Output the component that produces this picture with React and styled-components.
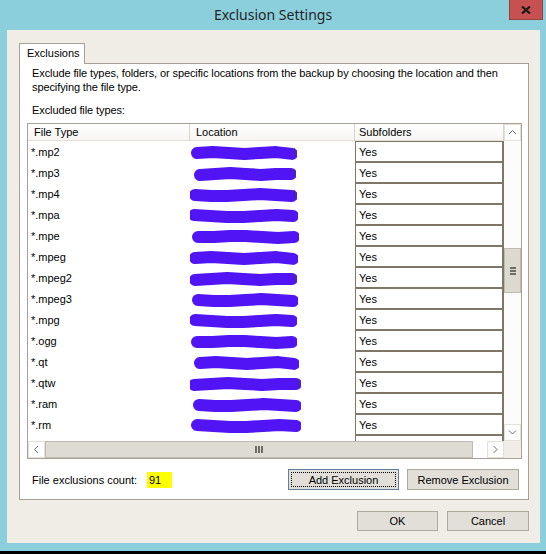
import React from "react";
import styled, { createGlobalStyle } from "styled-components";

const Global = createGlobalStyle`
  html, body { margin: 0; padding: 0; background: #000; }
  body { width: 546px; height: 554px; overflow: hidden; font-family: "Liberation Sans", Arial, sans-serif; font-size: 11px; color: #000; }
`;

const Window = styled.div`
  width: 546px;
  height: 551px;
  background: #8bcfdc;
  display: flex;
  flex-direction: column;
  padding-bottom: 8px;
  box-sizing: border-box;
`;

const TitleBar = styled.div`
  height: 30px;
  display: grid;
  grid-template-columns: 1fr auto 1fr;
  align-items: start;
`;

const Title = styled.div`
  grid-column: 2;
  font-family: "Noto Sans", "Open Sans", sans-serif;
  font-size: 14px;
  line-height: 30px;
  color: #262626;
`;

const CloseButton = styled.div`
  grid-column: 3;
  justify-self: end;
  margin-right: 3px;
  width: 34px;
  height: 20px;
  box-sizing: border-box;
  background: #c75050;
  border: 1px solid #99403a;
  border-top: none;
  display: flex;
  align-items: center;
  justify-content: center;
`;

const Client = styled.div`
  flex: 1;
  margin: 0 6px 0 7px;
  background: #f0ede7;
  padding: 13px 11px 0 12px;
  display: flex;
  flex-direction: column;
`;

const TabStrip = styled.div`
  display: flex;
`;

const Tab = styled.div`
  position: relative;
  z-index: 1;
  width: 66px;
  height: 21px;
  margin-bottom: -1px;
  box-sizing: border-box;
  border: 1px solid #a7a295;
  border-bottom: none;
  background: #fff;
  padding-left: 7px;
  line-height: 19px;
`;

const Panel = styled.div`
  height: 437px;
  box-sizing: border-box;
  border: 1px solid #a7a295;
  background: #fff;
  padding: 2px 6px 0 7px;
  display: flex;
  flex-direction: column;
`;

const Text = styled.div`
  margin-left: 5px;
  margin-top: ${(p) => p.$mt || 0}px;
  line-height: 14px;
  letter-spacing: -0.1px;
  white-space: nowrap;
`;

const GridBox = styled.div`
  margin-top: 6px;
  width: 495px;
  height: 336px;
  box-sizing: border-box;
  border: 1px solid #a7a295;
  display: grid;
  grid-template-columns: 476px 17px;
  grid-template-rows: 317px 17px;
`;

const TableArea = styled.div`
  overflow: hidden;
  background: #fff;
`;

const COLS = "162px 165px 149px";

const HeaderRow = styled.div`
  display: grid;
  grid-template-columns: ${COLS};
  height: 17px;
  box-sizing: border-box;
  border-bottom: 1px solid #e2dfd7;
  background: linear-gradient(#ffffff, #f6f5f2);
`;

const HeaderCell = styled.div`
  padding-left: ${(p) => p.$pad}px;
  line-height: 17px;
  border-right: 1px solid #d9d6ce;
  white-space: nowrap;
`;

const Row = styled.div`
  display: grid;
  grid-template-columns: ${COLS};
  height: 21px;
`;

const TypeCell = styled.div`
  padding-left: 3px;
  line-height: 22px;
  white-space: nowrap;
`;

const LocCell = styled.div`
  display: flex;
  align-items: center;
  overflow: hidden;
`;

const Slash = styled.span`
  margin-left: -3px;
  color: #444;
  font-size: 10px;
  line-height: 21px;
`;

const YesCell = styled.div`
  box-sizing: border-box;
  height: 21px;
  border: 1px solid #7e7767;
  border-right-width: 2px;
  padding-left: 3px;
  line-height: 20px;
`;

const VScroll = styled.div`
  display: flex;
  flex-direction: column;
  background: #fcfcfb;
`;

const ArrowBox = styled.div`
  width: 17px;
  height: 17px;
  flex: none;
  box-sizing: border-box;
  border: 1px solid #e4e1d9;
  background: #fff;
  display: flex;
  align-items: center;
  justify-content: center;
`;

const VTrack = styled.div`
  flex: 1;
  display: flex;
  flex-direction: column;
`;

const VThumb = styled.div`
  margin-top: ${(p) => p.$offset}px;
  height: 45px;
  box-sizing: border-box;
  background: #dcd9d1;
  border: 1px solid #bfbbb0;
  display: flex;
  flex-direction: column;
  align-items: center;
  justify-content: center;
  gap: 1px;
`;

const HGripLine = styled.div`
  width: 6px;
  height: 2px;
  background: #6f6c66;
`;

const HScroll = styled.div`
  display: flex;
  background: #fcfcfb;
`;

const HThumb = styled.div`
  flex: 1;
  box-sizing: border-box;
  background: #dedbd3;
  border: 1px solid #bfbbb0;
  display: flex;
  align-items: center;
  justify-content: center;
  gap: 1px;
`;

const VGripLine = styled.div`
  width: 2px;
  height: 7px;
  background: #6f6c66;
`;

const HTrack = styled.div`
  width: 14px;
  background: #fff;
`;

const Corner = styled.div`
  background: #f0ede7;
`;

const CountRow = styled.div`
  margin-top: 10px;
  height: 21px;
  display: flex;
  align-items: center;
  padding-right: 3px;
`;

const CountLabel = styled.div`
  margin-left: 5px;
  width: 115px;
  white-space: nowrap;
`;

const CountValue = styled.div`
  width: 25px;
  height: 16px;
  padding-left: 2px;
  box-sizing: border-box;
  background: #ffff00;
  line-height: 17px;
`;

const Spacer = styled.div`
  flex: 1;
`;

const Button = styled.div`
  position: relative;
  width: ${(p) => p.$w}px;
  height: ${(p) => p.$h || 21}px;
  margin-left: ${(p) => p.$ml || 0}px;
  box-sizing: border-box;
  background: #e2dfd8;
  border: 1px solid ${(p) => (p.$focused ? "#5f819f" : "#aca99e")};
  display: flex;
  align-items: center;
  justify-content: center;
  white-space: nowrap;
  &::after {
    content: "";
    display: ${(p) => (p.$focused ? "block" : "none")};
    position: absolute;
    inset: 2px;
    border: 1px dotted #000;
  }
`;

const DialogButtons = styled.div`
  margin-top: 11px;
  display: flex;
  justify-content: flex-end;
  gap: 9px;
`;

const rows = [
  { ext: "*.mp2", x0: 3, x1: 106, slash: true },
  { ext: "*.mp3", x0: 6, x1: 105, slash: true },
  { ext: "*.mp4", x0: 1, x1: 106, slash: true },
  { ext: "*.mpa", x0: 0, x1: 107 },
  { ext: "*.mpe", x0: 4, x1: 108 },
  { ext: "*.mpeg", x0: 1, x1: 107 },
  { ext: "*.mpeg2", x0: 1, x1: 106, slash: true },
  { ext: "*.mpeg3", x0: 4, x1: 107 },
  { ext: "*.mpg", x0: 1, x1: 106 },
  { ext: "*.ogg", x0: 3, x1: 106 },
  { ext: "*.qt", x0: 6, x1: 108 },
  { ext: "*.qtw", x0: 0, x1: 110, slash: true },
  { ext: "*.ram", x0: 5, x1: 110 },
  { ext: "*.rm", x0: 3, x1: 110 },
];

const wobbles = [
  [0, -1, 0, 1, 0, -1, 1],
  [1, 0, -1, 0, 1, 0, 0],
  [0, 1, 1, 0, -1, 0, 1],
  [-1, 0, 1, 1, 0, -1, 0],
  [0, 0, -1, -1, 0, 1, 0],
];

function Scribble({ x0, x1, idx }) {
  const w = wobbles[idx % wobbles.length];
  const a = x0 + 4;
  const b = x1 - 4;
  const pts = w
    .map((d, i) => `${(a + ((b - a) * i) / (w.length - 1)).toFixed(1)},${11 + d * 0.9}`)
    .join(" ");
  return (
    <svg width={x1 + 1} height="21" viewBox={`0 0 ${x1 + 1} 21`}>
      <polyline points={pts} fill="none" stroke="#5014f5" strokeWidth="12" strokeLinecap="round" strokeLinejoin="round" />
    </svg>
  );
}

const Chevron = ({ dir }) => {
  const paths = {
    up: "M1 5 L4.5 1.5 L8 5",
    down: "M1 1.5 L4.5 5 L8 1.5",
    left: "M5 1 L1.5 4.5 L5 8",
    right: "M1.5 1 L5 4.5 L1.5 8",
  };
  const horiz = dir === "left" || dir === "right";
  return (
    <svg width={horiz ? 7 : 9} height={horiz ? 9 : 7} viewBox={horiz ? "0 0 7 9" : "0 0 9 7"}>
      <path d={paths[dir]} fill="none" stroke="#6a6a6a" strokeWidth="1" />
    </svg>
  );
};

export default function App() {
  return (
    <>
      <Global />
      <Window>
        <TitleBar>
          <Title>Exclusion Settings</Title>
          <CloseButton>
            <svg width="10" height="8" viewBox="0 0 10 8">
              <path d="M1 0.5 L9 7.5 M9 0.5 L1 7.5" stroke="#1a1a1a" strokeWidth="2.2" />
            </svg>
          </CloseButton>
        </TitleBar>
        <Client>
          <TabStrip>
            <Tab>Exclusions</Tab>
          </TabStrip>
          <Panel>
            <Text>
              Exclude file types, folders, or specific locations from the backup by choosing the location and then
              <br />
              specifying the file type.
            </Text>
            <Text $mt={9}>Excluded file types:</Text>
            <GridBox>
              <TableArea>
                <HeaderRow>
                  <HeaderCell $pad={6}>File Type</HeaderCell>
                  <HeaderCell $pad={6}>Location</HeaderCell>
                  <HeaderCell $pad={4}>Subfolders</HeaderCell>
                </HeaderRow>
                {rows.map((r, i) => (
                  <Row key={r.ext}>
                    <TypeCell>{r.ext}</TypeCell>
                    <LocCell>
                      <Scribble x0={r.x0} x1={r.x1} idx={i} />
                      {r.slash && <Slash>\</Slash>}
                    </LocCell>
                    <YesCell>Yes</YesCell>
                  </Row>
                ))}
                <Row>
                  <TypeCell />
                  <LocCell />
                  <YesCell />
                </Row>
              </TableArea>
              <VScroll>
                <ArrowBox>
                  <Chevron dir="up" />
                </ArrowBox>
                <VTrack>
                  <VThumb $offset={107}>
                    <HGripLine />
                    <HGripLine />
                    <HGripLine />
                  </VThumb>
                </VTrack>
                <ArrowBox>
                  <Chevron dir="down" />
                </ArrowBox>
              </VScroll>
              <HScroll>
                <ArrowBox>
                  <Chevron dir="left" />
                </ArrowBox>
                <HThumb>
                  <VGripLine />
                  <VGripLine />
                  <VGripLine />
                </HThumb>
                <HTrack />
                <ArrowBox>
                  <Chevron dir="right" />
                </ArrowBox>
              </HScroll>
              <Corner />
            </GridBox>
            <CountRow>
              <CountLabel>File exclusions count:</CountLabel>
              <CountValue>91</CountValue>
              <Spacer />
              <Button $w={111} $focused>
                Add Exclusion
              </Button>
              <Button $w={112} $ml={8}>
                Remove Exclusion
              </Button>
            </CountRow>
          </Panel>
          <DialogButtons>
            <Button $w={81} $h={20}>
              OK
            </Button>
            <Button $w={82} $h={20}>
              Cancel
            </Button>
          </DialogButtons>
        </Client>
      </Window>
    </>
  );
}
